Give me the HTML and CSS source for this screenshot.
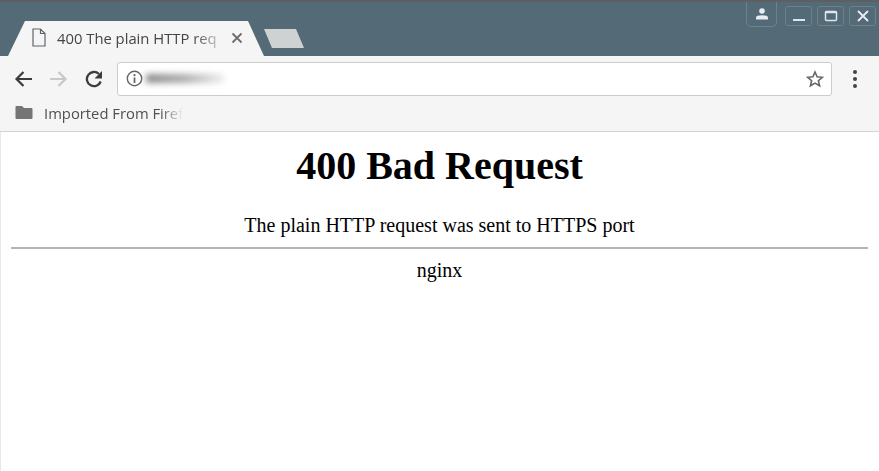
FILE: index.html
```html
<!DOCTYPE html>
<html lang="en">
<head>
    <meta charset="UTF-8">
    <title>400 The plain HTTP request was sent to HTTPS port</title>
    <link rel="stylesheet" href="styles.css">
</head>
<body>
    <div class="browser">
        <div class="titlebar">
            <div class="tab">
                <svg class="tab-page" width="14" height="19" viewBox="0 0 14 19">
                    <path d="M1 1h7.500l4.500 4.500V18H1z M8.500 1v4.500H13" fill="none" stroke="#5f6368" stroke-width="1.200"/>
                </svg>
                <span class="tab-title">400 The plain HTTP req</span>
                <svg class="tab-close" width="12" height="12" viewBox="0 0 12 12">
                    <path d="M1.500 1.500l9 9M10.500 1.500l-9 9" stroke="#6e6e6e" stroke-width="1.800"/>
                </svg>
            </div>
            <div class="new-tab"></div>
            <div class="window-controls">
                <div class="win-btn profile">
                    <svg width="14" height="14" viewBox="0 0 14 14">
                        <circle cx="7" cy="4" r="2.800" fill="#e6ecef"/>
                        <path d="M1 12.500v-2c0-1.500 2-2.300 6-2.300s6 .8 6 2.300v2z" fill="#e6ecef"/>
                    </svg>
                </div>
                <div class="win-btn">
                    <svg width="14" height="14" viewBox="0 0 14 14"><path d="M1 11h12" stroke="#dfe6ea" stroke-width="2"/></svg>
                </div>
                <div class="win-btn">
                    <svg width="14" height="14" viewBox="0 0 14 14"><rect x="1.500" y="2.500" width="11" height="9" rx="1" fill="none" stroke="#dfe6ea" stroke-width="1.500"/><path d="M1.500 3.500h11" stroke="#dfe6ea" stroke-width="1.500"/></svg>
                </div>
                <div class="win-btn">
                    <svg width="14" height="14" viewBox="0 0 14 14"><path d="M2 2l10 10M12 2L2 12" stroke="#e6ecef" stroke-width="1.900"/></svg>
                </div>
            </div>
        </div>

        <div class="toolbar">
            <svg class="nav-icon back" width="18" height="18" viewBox="0 0 18 18">
                <path d="M18 9H3M9.500 2L2.500 9l7 7" fill="none" stroke="#3c3c3c" stroke-width="2.200"/>
            </svg>
            <svg class="nav-icon" width="18" height="18" viewBox="0 0 18 18">
                <path d="M0 9h15M8.500 2l7 7-7 7" fill="none" stroke="#c8c8c8" stroke-width="2.200"/>
            </svg>
            <svg class="nav-icon" width="18" height="18" viewBox="0 0 18 18">
                <path d="M15.700 11.500A7.100 7.100 0 1 1 14 4" fill="none" stroke="#3c3c3c" stroke-width="2.300"/>
                <path d="M17 1v7.500H9.500z" fill="#3c3c3c"/>
            </svg>
            <div class="omnibox">
                <svg width="17" height="17" viewBox="0 0 17 17">
                    <circle cx="8.500" cy="8.500" r="7.200" fill="none" stroke="#666" stroke-width="1.400"/>
                    <circle cx="8.500" cy="5.200" r="1.100" fill="#666"/>
                    <path d="M8.500 7.500v5.500" stroke="#666" stroke-width="1.800"/>
                </svg>
                <div class="url-blur"></div>
                <svg class="star" width="18" height="18" viewBox="0 0 18 18">
                    <path d="M9 2l2.100 4.800 5.200.5-3.900 3.400 1.200 5.100L9 13.100l-4.600 2.700 1.200-5.100-3.900-3.400 5.200-.5z" fill="none" stroke="#666" stroke-width="1.600"/>
                </svg>
            </div>
            <div class="menu-dots"><span></span><span></span><span></span></div>
        </div>

        <div class="bookmarks">
            <svg width="18" height="15" viewBox="0 0 18 15">
                <path d="M1.500 1h5.500l2 2h7.500c.5 0 1 .5 1 1v9c0 .5-.5 1-1 1h-15c-.5 0-1-.5-1-1V2c0-.5.500-1 1-1z" fill="#757575"/>
            </svg>
            <span class="bookmark-label">Imported From Firef</span>
        </div>

        <div class="page">
            <h1>400 Bad Request</h1>
            <p>The plain HTTP request was sent to HTTPS port</p>
            <hr>
            <p class="server">nginx</p>
        </div>
    </div>
</body>
</html>
```

FILE: styles.css
```css
html, body {
    margin: 0;
    height: 100%;
}
body {
    background-color: #fff;
    overflow: hidden;
}
.browser {
    display: flex;
    flex-direction: column;
    height: 100%;
    font-family: "Open Sans", "Noto Sans", sans-serif;
}

/* title bar */
.titlebar {
    display: flex;
    align-items: flex-end;
    height: 54px;
    padding-left: 8px;
    background-color: #546a76;
    border-top: 2px solid #5c6063;
}
.tab {
    display: flex;
    align-items: center;
    gap: 11px;
    width: 256px;
    height: 35px;
    box-sizing: border-box;
    padding: 0 20px 2px 24px;
    background-color: #f5f5f5;
    clip-path: polygon(0 100%, 17px 0, 240px 0, 100% 100%);
}
.tab-title {
    width: 162px;
    flex: none;
    white-space: nowrap;
    font-size: 14.800px;
    color: #444;
    -webkit-mask-image: linear-gradient(to right, #000 84%, rgba(0, 0, 0, 0.25) 100%);
    mask-image: linear-gradient(to right, #000 84%, rgba(0, 0, 0, 0.25) 100%);
}
.tab-close {
    flex: none;
    margin-left: 1px;
}
.tab-page {
    flex: none;
}
.new-tab {
    width: 40px;
    height: 19px;
    margin: 0 0 8px 0;
    background-color: #cfd2d3;
    clip-path: polygon(0 0, 32px 0, 100% 100%, 8px 100%);
}
.window-controls {
    display: flex;
    align-self: flex-start;
    gap: 5px;
    margin-left: auto;
    padding-right: 3px;
}
.win-btn {
    display: flex;
    align-items: center;
    justify-content: center;
    width: 27px;
    height: 20px;
    margin-top: 4px;
    box-sizing: border-box;
    border: 1px solid #6c818c;
    border-radius: 3px;
}
.win-btn.profile {
    width: 31px;
    height: 25px;
    margin: 0 3px 0 0;
    border-top: none;
    border-radius: 0 0 5px 5px;
}

/* toolbar */
.toolbar {
    display: flex;
    align-items: center;
    gap: 17px;
    height: 40px;
    box-sizing: border-box;
    padding: 5px 15px 0;
    background-color: #f5f5f5;
}
.nav-icon {
    flex: none;
}
.nav-icon.back {
    margin-left: -1px;
    margin-right: 1px;
}
.omnibox {
    display: flex;
    flex: 1;
    align-items: center;
    height: 34px;
    box-sizing: border-box;
    margin-left: -3px;
    padding: 0 8px;
    background-color: #fff;
    border: 1px solid #ccc;
    border-radius: 3px;
}
.url-blur {
    width: 78px;
    height: 9px;
    margin-left: 3px;
    background: linear-gradient(to right, #8a8a8a, #adadad 50%, #efefef);
    filter: blur(3px);
}
.star {
    margin-left: auto;
    margin-right: -1px;
}
.menu-dots {
    display: flex;
    flex-direction: column;
    gap: 3px;
    margin: 0 7px 0 4px;
}
.menu-dots span {
    width: 4px;
    height: 4px;
    border-radius: 50%;
    background-color: #444;
}

/* bookmarks bar */
.bookmarks {
    display: flex;
    align-items: center;
    gap: 11px;
    height: 36px;
    box-sizing: border-box;
    padding: 0 0 2px 15px;
    background-color: #f5f5f5;
    border-bottom: 1px solid #d4d4d4;
}
.bookmark-label {
    white-space: nowrap;
    font-size: 14.800px;
    color: #505050;
    -webkit-mask-image: linear-gradient(to right, #000 84%, transparent 100%);
    mask-image: linear-gradient(to right, #000 84%, transparent 100%);
}

/* page content */
.page {
    flex: 1;
    padding: 0 11px 0 10px;
    border-left: 1px solid #e8e8e8;
    font-family: "Liberation Serif", serif;
    font-size: 20px;
    color: #000;
    text-align: center;
}
.page h1 {
    margin: 11px 0 0;
    font-size: 40px;
    line-height: 46px;
}
.page p {
    margin: 25px 0 0;
    line-height: 23px;
}
.page hr {
    margin: 10px 0 0;
    height: 0;
    border: none;
    border-top: 2px solid #b4b4b4;
}
.page p.server {
    margin-top: 10px;
}
```
